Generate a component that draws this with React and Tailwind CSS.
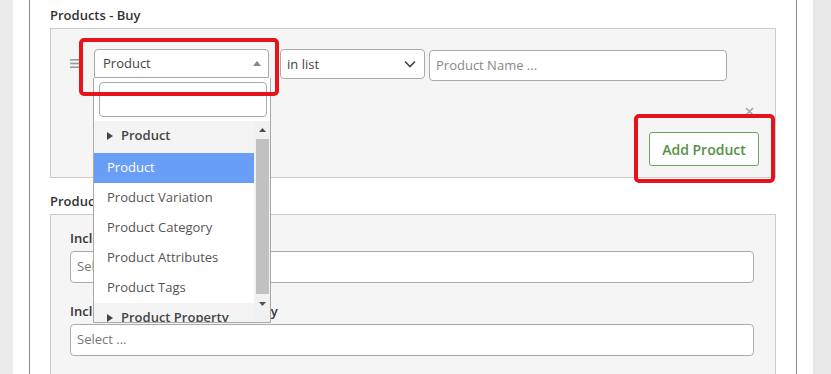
import React from "react";

function Handle() {
  return (
    <svg width="9" height="9" viewBox="0 0 9 9" className="shrink-0">
      <rect x="0" y="0" width="9" height="1.6" fill="#9a9a9a" />
      <rect x="0" y="3.7" width="9" height="1.6" fill="#9a9a9a" />
      <rect x="0" y="7.4" width="9" height="1.6" fill="#9a9a9a" />
    </svg>
  );
}

function Option({ children, active }) {
  return (
    <div
      className={
        "h-[30px] flex items-center pl-[13px] text-[13px] whitespace-nowrap " +
        (active ? "bg-[#699ef7] text-white" : "text-[#555]")
      }
    >
      {children}
    </div>
  );
}

function Group({ children, first }) {
  return (
    <div
      className={
        "flex items-center pl-[13px] text-[13px] font-semibold text-[#444] bg-[#f4f4f4] whitespace-nowrap " +
        (first ? "h-[32px] pb-[2px]" : "h-[30px]")
      }
    >
      <svg width="6" height="8" viewBox="0 0 6 8" className="mr-[8px]">
        <polygon points="0,0 6,4 0,8" fill="#444" />
      </svg>
      {children}
    </div>
  );
}

export default function App() {
  return (
    <div className="relative w-[831px] h-[374px] overflow-hidden bg-[#ececec] flex font-['Open_Sans',sans-serif]">
      <div className="ml-[13px] w-[800px] h-full bg-white px-[16px]">
        <div className="h-full border-x border-[#8c8c8c] px-[20px] pt-[5px]">
          <div className="h-[20px] leading-[20px] text-[13px] font-semibold text-[#333]">Products - Buy</div>
          <div className="mt-[3px] h-[150px] border border-[#cccccc] bg-[#f5f5f5] pt-[20px] pl-[19px] pr-[16px]">
            <div className="flex items-start">
              <div className="h-[29px] flex items-center">
                <Handle />
              </div>
              <div className="relative ml-[15px] w-[175px] h-[29px] border border-[#aaaaaa] rounded-t-[4px] bg-white flex items-center pl-[8px] pr-[7px] text-[13px] text-[#444]">
                <span className="flex-1 pt-[1px]">Product</span>
                <svg width="8" height="5" viewBox="0 0 8 5">
                  <polygon points="0,5 4,0 8,5" fill="#888" />
                </svg>
                <div className="absolute z-10 top-[28px] left-[-2px] w-[178px] h-[245px] border border-[#aaaaaa] border-t-0 bg-white overflow-hidden">
                  <div className="pt-[4px] pl-[5px] pr-[3px] pb-[4px]">
                    <div className="h-[35px] border border-[#aaaaaa] rounded-[4px] bg-white" />
                  </div>
                  <div className="flex h-[201px]">
                    <div className="w-[160px]">
                      <Group first>Product</Group>
                      <Option active>Product</Option>
                      <Option>Product Variation</Option>
                      <Option>Product Category</Option>
                      <Option>Product Attributes</Option>
                      <Option>Product Tags</Option>
                      <Group>Product Property</Group>
                    </div>
                    <div className="w-[16px] bg-[#f1f1f1] flex flex-col items-center">
                      <div className="h-[18px] w-full flex items-center justify-center">
                        <svg width="7" height="4" viewBox="0 0 7 4">
                          <polygon points="0,4 3.5,0 7,4" fill="#505050" />
                        </svg>
                      </div>
                      <div className="w-[13px] h-[155px] bg-[#c1c1c1]" />
                      <div className="h-[20px] w-full flex items-center justify-center">
                        <svg width="7" height="4" viewBox="0 0 7 4">
                          <polygon points="0,0 3.5,4 7,0" fill="#505050" />
                        </svg>
                      </div>
                    </div>
                  </div>
                </div>
              </div>
              <div className="ml-[11px] w-[145px] h-[30px] border border-[#aaaaaa] rounded-[4px] bg-white flex items-center pl-[6px] pr-[8px] text-[13px] text-[#444]">
                <span className="flex-1 pt-[1px]">in list</span>
                <svg width="12" height="8" viewBox="0 0 12 8">
                  <polyline points="1,1.5 6,6.5 11,1.5" fill="none" stroke="#444" strokeWidth="1.6" />
                </svg>
              </div>
              <div className="ml-[4px] mt-[1px] w-[298px] h-[31px] border border-[#aaaaaa] rounded-[4px] bg-white flex items-center pl-[6px] text-[13px] text-[#888]">
                Product Name ...
              </div>
            </div>
            <div className="flex flex-col items-end">
              <div className="mt-[26px] mr-[5px] h-[9px] w-[9px]">
                <svg width="9" height="9" viewBox="0 0 9 9">
                  <path d="M1 1 L8 8 M8 1 L1 8" stroke="#a5a5a5" strokeWidth="1.7" />
                </svg>
              </div>
              <button className="mt-[16px] w-[110px] h-[34px] border border-[#6fa35e] rounded-[3px] bg-white text-[14px] font-semibold text-[#569044]">
                Add Product
              </button>
            </div>
          </div>
          <div className="mt-[13px] h-[20px] leading-[20px] text-[13px] font-semibold text-[#333]">Products - Get</div>
          <div className="mt-[3px] h-[200px] border border-[#cccccc] bg-[#f5f5f5] pt-[13px] pl-[19px] pr-[21px]">
            <div className="h-[20px] leading-[20px] text-[13px] font-semibold text-[#333]">Include Products</div>
            <div className="mt-[3px] h-[32px] border border-[#aaaaaa] rounded-[4px] bg-white flex items-center pl-[6px] text-[13px] text-[#777]">
              Select ...
            </div>
            <div className="mt-[18px] h-[20px] leading-[20px] text-[13px] font-semibold text-[#333]">Include Products within Category</div>
            <div className="mt-[3px] h-[32px] border border-[#aaaaaa] rounded-[4px] bg-white flex items-center pl-[6px] text-[13px] text-[#777]">
              Select ...
            </div>
          </div>
        </div>
      </div>
      <div className="flex-1 bg-[#e8e8e8]" />
      <div className="absolute left-[79px] top-[38px] w-[200px] h-[58px] border-[4px] border-[#e5141b] rounded-[5px] z-20" />
      <div className="absolute left-[634px] top-[114px] w-[141px] h-[69px] border-[4px] border-[#e5141b] rounded-[5px] z-20" />
    </div>
  );
}
